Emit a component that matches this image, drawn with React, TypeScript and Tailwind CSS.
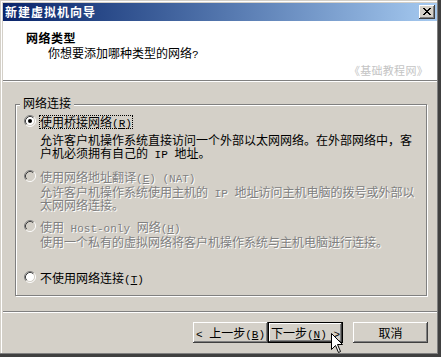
import type { ReactNode } from 'react';

// latin runs are drawn in a narrow mono face, like the bitmap SimSun in the shot;
// zero line-height keeps them from stretching the CJK line box
function M({ children }: { children: ReactNode }) {
  return <span className="font-['Liberation_Mono',monospace] text-[11px] leading-[0px]">{children}</span>;
}

function Radio({ checked, disabled }: { checked?: boolean; disabled?: boolean }) {
  return (
    <svg width="12" height="12" viewBox="0 0 12 12" className="shrink-0">
      <circle cx="6" cy="6" r="4.5" fill={disabled ? '#d4d0c8' : '#ffffff'} />
      <path d="M2.11 9.89A5.5 5.5 0 0 1 9.89 2.11" stroke="#808080" fill="none" />
      <path d="M9.89 2.11A5.5 5.5 0 0 1 2.11 9.89" stroke="#ffffff" fill="none" />
      <path d="M2.82 9.18A4.5 4.5 0 0 1 9.18 2.82" stroke="#404040" fill="none" />
      <path d="M9.18 2.82A4.5 4.5 0 0 1 2.82 9.18" stroke="#d4d0c8" fill="none" />
      {checked && <circle cx="6" cy="6" r="2" fill="#000000" />}
    </svg>
  );
}

interface OptionProps {
  label: ReactNode;
  lines?: ReactNode[];
  checked?: boolean;
  disabled?: boolean;
  focused?: boolean;
  className?: string;
  descClassName?: string;
}

function Option({ label, lines, checked, disabled, focused, className = '', descClassName = '' }: OptionProps) {
  const tone = disabled ? 'text-[#808080] [text-shadow:1px_1px_0_#ffffff]' : 'text-black';
  return (
    <div className={`flex items-start pl-[8px] ${className}`}>
      <Radio checked={checked} disabled={disabled} />
      <div className="ml-[3px] flex flex-col">
        <span
          className={`h-[14px] self-start whitespace-nowrap border leading-[12px] ${
            focused ? 'border-dotted border-black' : 'border-transparent'
          } ${tone}`}
        >
          {label}
        </span>
        {lines && (
          <div className={`pl-[1px] ${descClassName} ${tone}`}>
            {lines.map((line, i) => (
              <div key={i} className="h-[13px] whitespace-nowrap leading-[13px]">
                {line}
              </div>
            ))}
          </div>
        )}
      </div>
    </div>
  );
}

export default function App() {
  return (
    <div className="relative flex h-[357px] w-[441px] flex-col bg-[#d4d0c8] pt-[3px] pr-[4px] pb-[4px] pl-[3px] font-['Noto_Sans_CJK_SC',sans-serif] text-[12px] text-black shadow-[inset_-3px_-3px_0_#404040,inset_-4px_-4px_0_#808080,inset_1px_1px_0_#d4d0c8,inset_2px_2px_0_#ffffff]">
      {/* title bar */}
      <div className="flex h-[18px] shrink-0 items-center justify-between bg-linear-to-r from-[#0a246a] to-[#a6caf0] pr-[2px] pl-[2px]">
        <span className="text-[12px] leading-[18px] font-bold tracking-[1px] text-white">新建虚拟机向导</span>
        <button className="flex h-[14px] w-[16px] items-center justify-center bg-[#d4d0c8] shadow-[inset_-1px_-1px_0_#404040,inset_1px_1px_0_#ffffff,inset_-2px_-2px_0_#808080,inset_2px_2px_0_#d4d0c8]">
          <svg width="8" height="7" viewBox="0 0 8 7" shapeRendering="crispEdges" className="mt-[-1px]">
            <path
              fill="#000"
              d="M0 0h2v1h-2z M6 0h2v1h-2z M1 1h2v1h-2z M5 1h2v1h-2z M2 2h4v1h-4z M3 3h2v1h-2z M2 4h4v1h-4z M1 5h2v1h-2z M5 5h2v1h-2z M0 6h2v1h-2z M6 6h2v1h-2z"
            />
          </svg>
        </button>
      </div>

      {/* header */}
      <div className="flex h-[59px] shrink-0 flex-col bg-white pt-[10px]">
        <div className="pl-[23px] leading-[14px] font-bold tracking-[0.5px]">网络类型</div>
        <div className="mt-[1px] pl-[45px] leading-[14px]">
          你想要添加哪种类型的网络<M>?</M>
        </div>
        <div className="mt-[4px] flex justify-end pr-[9px] text-[11px] leading-[12px] tracking-[0.3px] text-[#c4c4c4]">
          《基础教程网》
        </div>
      </div>
      <div className="h-[2px] shrink-0 border-t border-b border-t-[#808080] border-b-white" />

      {/* group box */}
      <div className="relative mt-[22px] ml-[12px] h-[192px] w-[412px] shrink-0 border border-[#808080] pt-[10px] shadow-[inset_1px_1px_0_#ffffff,1px_1px_0_#ffffff]">
        <span className="absolute top-[-9px] left-[4px] bg-[#d4d0c8] px-[3px] leading-[14px]">网络连接</span>

        <Option
          checked
          focused
          label={
            <>
              使用桥接网络
              <M>
                (<u>R</u>)
              </M>
            </>
          }
          descClassName="mt-[4px]"
          lines={[
            '允许客户机操作系统直接访问一个外部以太网网络。在外部网络中，客',
            <>
              户机必须拥有自己的<M> IP </M>地址。
            </>,
          ]}
        />
        <Option
          disabled
          className="mt-[11px]"
          label={
            <>
              使用网络地址翻译
              <M>
                (<u>E</u>) (NAT)
              </M>
            </>
          }
          descClassName="mt-[1px]"
          lines={[
            <>
              允许客户机操作系统使用主机的<M> IP </M>地址访问主机电脑的拨号或外部以
            </>,
            '太网网络连接。',
          ]}
        />
        <Option
          disabled
          className="mt-[9px]"
          label={
            <>
              使用<M> Host-only </M>网络
              <M>
                (<u>H</u>)
              </M>
            </>
          }
          descClassName="mt-[1px]"
          lines={['使用一个私有的虚拟网络将客户机操作系统与主机电脑进行连接。']}
        />
        <Option
          className="mt-[23px]"
          label={
            <>
              不使用网络连接
              <M>
                (<u>T</u>)
              </M>
            </>
          }
        />
      </div>

      <div className="mt-[15px] h-[2px] shrink-0 border-t border-b border-t-[#808080] border-b-white" />

      {/* buttons */}
      <div className="mt-[9px] flex justify-end pr-[9px]">
        <button className="flex h-[21px] w-[75px] items-center justify-center bg-[#d4d0c8] shadow-[inset_-1px_-1px_0_#404040,inset_1px_1px_0_#ffffff,inset_-2px_-2px_0_#808080,inset_2px_2px_0_#d4d0c8]">
          <span className="whitespace-pre leading-[14px]">
            <M>{'< '}</M>上一步
            <M>
              (<u>B</u>)
            </M>
          </span>
        </button>
        <button className="flex h-[21px] w-[75px] items-center justify-center border border-black bg-[#d4d0c8] shadow-[inset_-1px_-1px_0_#404040,inset_1px_1px_0_#ffffff,inset_-2px_-2px_0_#808080,inset_2px_2px_0_#d4d0c8]">
          <span className="whitespace-pre leading-[14px]">
            下一步
            <M>
              (<u>N</u>){' >'}
            </M>
          </span>
        </button>
        <button className="ml-[10px] flex h-[21px] w-[75px] items-center justify-center bg-[#d4d0c8] shadow-[inset_-1px_-1px_0_#404040,inset_1px_1px_0_#ffffff,inset_-2px_-2px_0_#808080,inset_2px_2px_0_#d4d0c8]">
          <span className="leading-[14px]">取消</span>
        </button>
      </div>

      {/* mouse pointer over the Next button */}
      <svg width="13" height="21" viewBox="0 0 13 21" className="absolute top-[333px] left-[331px]">
        <path
          d="M0.5 0.5 L0.5 16.5 L4.5 12.5 L7.5 19.5 L9.5 18.5 L6.5 11.5 L11.5 11.5 Z"
          fill="#ffffff"
          stroke="#000000"
          strokeLinejoin="miter"
        />
      </svg>
    </div>
  );
}
